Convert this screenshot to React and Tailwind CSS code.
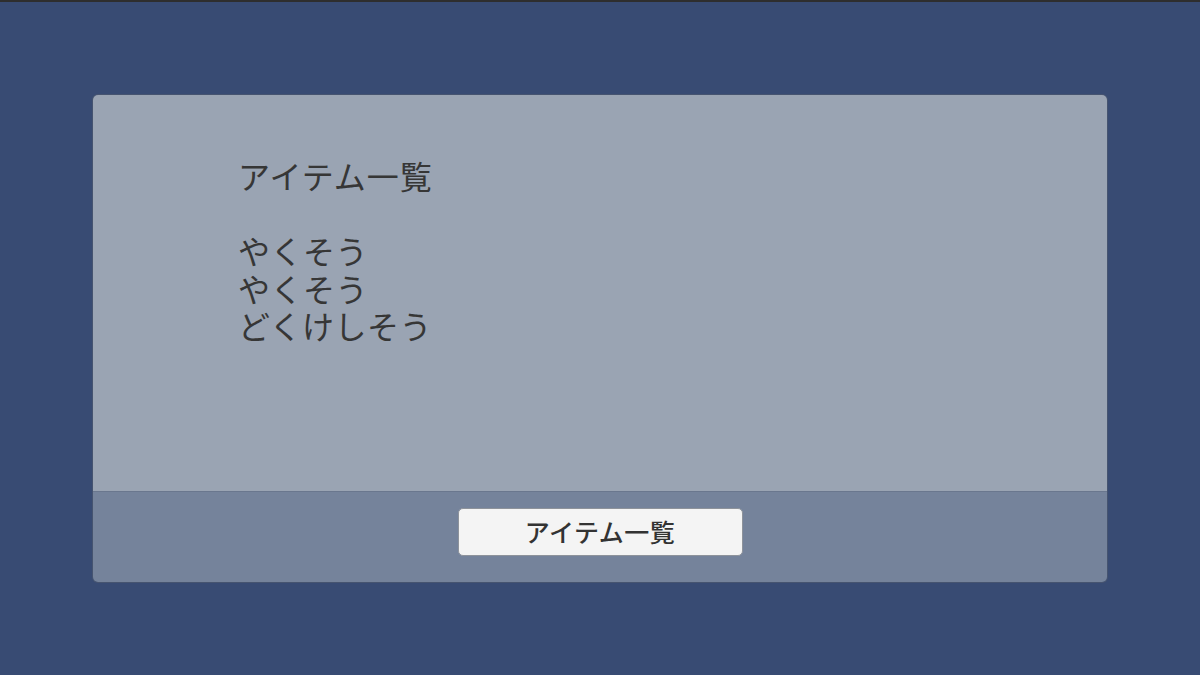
export default function App() {
  const font = { fontFamily: '"Noto Sans CJK JP", "Noto Sans", sans-serif' };
  return (
    <div className="w-[1200px] h-[675px] bg-[#384b73] border-t-2 border-[#2e2e2e] pt-[93px] overflow-hidden" style={font}>
      <div className="mx-auto w-[1014px] h-[487px] rounded-[5px] overflow-hidden flex flex-col shadow-[0_0_0_1px_rgba(80,90,110,0.6)]">
        <div className="flex-1 bg-[#9aa4b3] pl-[145px] pt-[62px] text-[#363636] text-[32px] leading-[37.5px] tracking-[0.5px]">
          <div className="tracking-[1px]">アイテム一覧</div>
          <div>&nbsp;</div>
          <div>やくそう</div>
          <div>やくそう</div>
          <div>どくけしそう</div>
        </div>
        <div className="h-[91px] bg-[#75839b] border-t border-[#6a778e] flex justify-center pt-[16px]">
          <button className="w-[285px] h-[48px] bg-[#f4f4f4] border border-[#8e939b] rounded-[5px] text-[#333333] text-[25px] font-medium tracking-[0.5px] flex items-center justify-center" style={font}>
            アイテム一覧
          </button>
        </div>
      </div>
    </div>
  );
}
